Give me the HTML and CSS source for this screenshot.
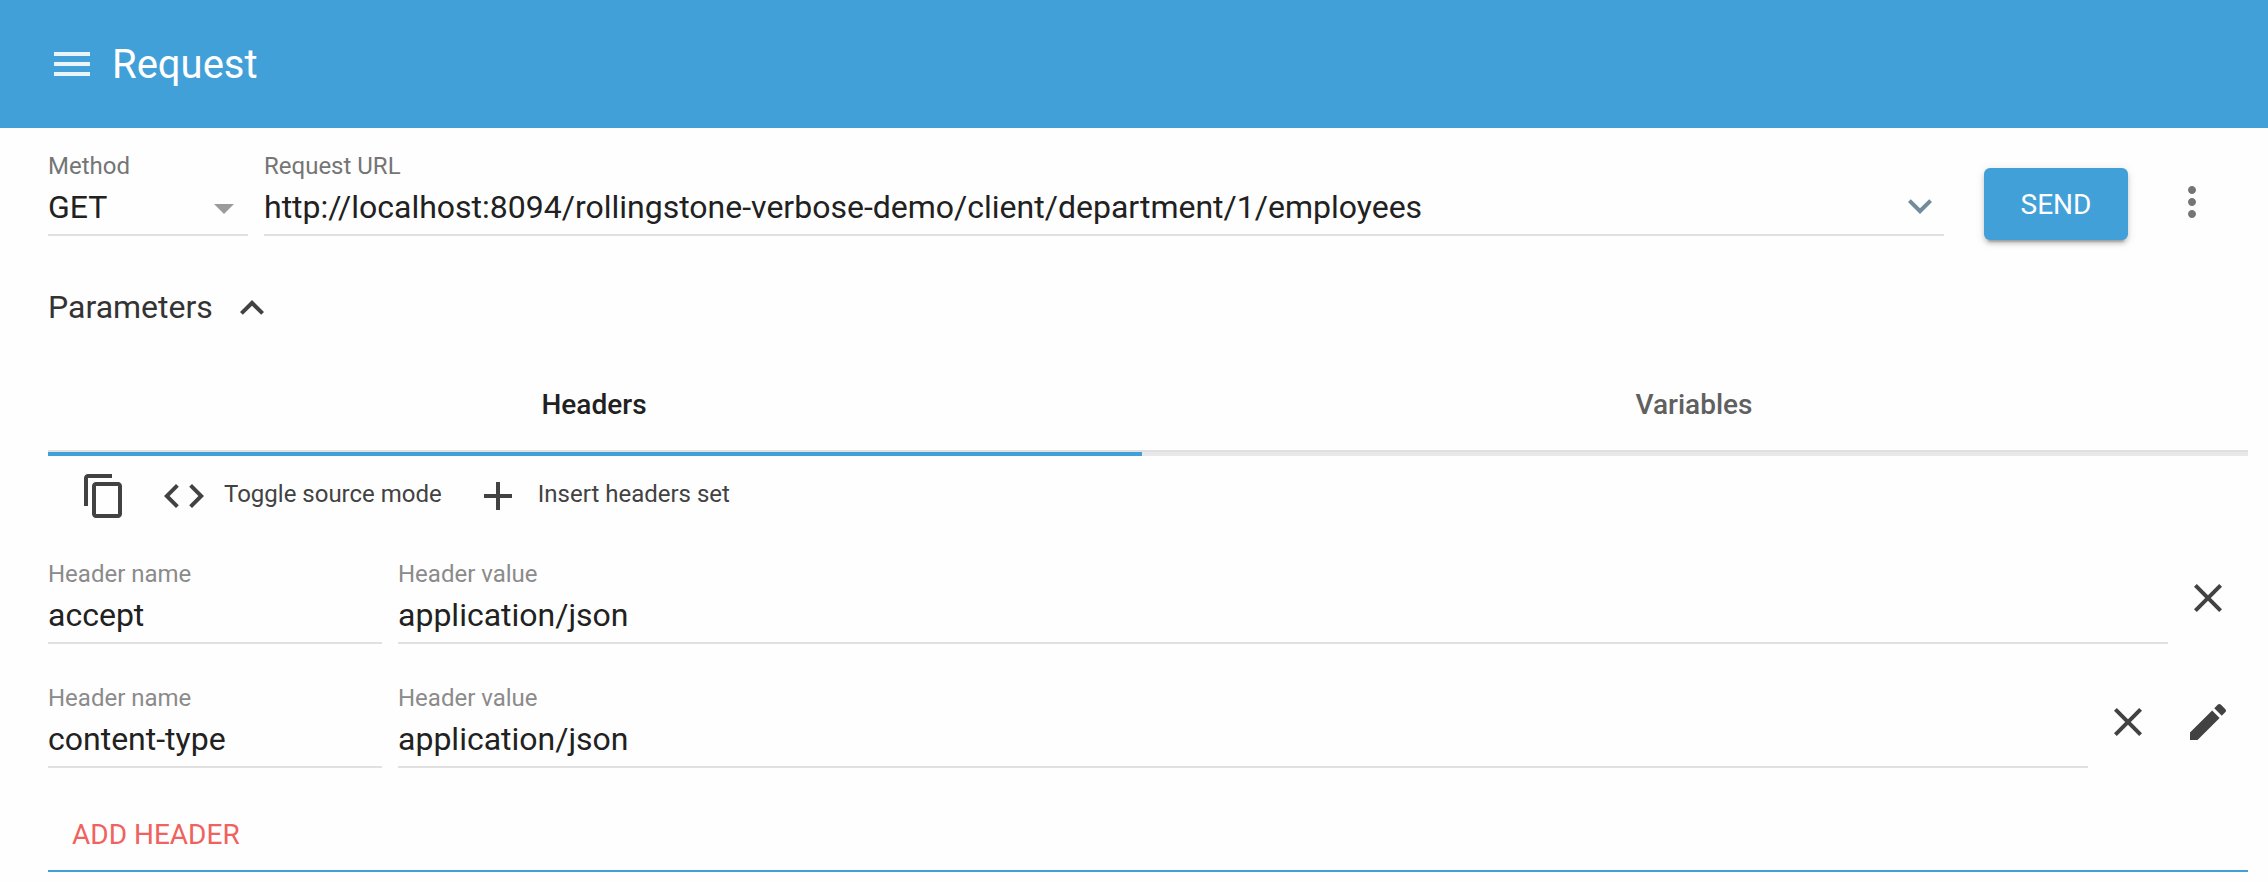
FILE: index.html
```html
<!DOCTYPE html>
<html lang="en">
<head>
<meta charset="utf-8">
<title>Request</title>
<link rel="stylesheet" href="styles.css">
</head>
<body>
<header class="toolbar">
  <svg class="icon menu-icon" viewBox="0 0 24 24"><path d="M3 18h18v-2H3v2zm0-5h18v-2H3v2zm0-7v2h18V6H3z"/></svg>
  <h1 class="title">Request</h1>
</header>
<main class="content">
  <section class="request-line">
    <div class="field method">
      <label class="label">Method</label>
      <div class="value"><span>GET</span><svg class="icon drop" viewBox="0 0 24 24"><path d="M7 10l5 5 5-5z"/></svg></div>
    </div>
    <div class="field url">
      <label class="label">Request URL</label>
      <div class="value"><span>http://localhost:8094/rollingstone-verbose-demo/client/department/1/employees</span><svg class="icon expand" viewBox="0 0 24 24"><path d="M16.59 8.59L12 13.17 7.41 8.59 6 10l6 6 6-6z"/></svg></div>
    </div>
    <button class="send">SEND</button>
    <svg class="icon more" viewBox="0 0 24 24"><path d="M12 8c1.1 0 2-.9 2-2s-.9-2-2-2-2 .9-2 2 .9 2 2 2zm0 2c-1.1 0-2 .9-2 2s.9 2 2 2 2-.9 2-2-.9-2-2-2zm0 6c-1.1 0-2 .9-2 2s.9 2 2 2 2-.9 2-2-.9-2-2-2z"/></svg>
  </section>
  <div class="parameters">
    <span>Parameters</span>
    <svg class="icon" viewBox="0 0 24 24"><path d="M12 8l-6 6 1.41 1.41L12 10.83l4.59 4.58L18 14z"/></svg>
  </div>
  <nav class="tabs">
    <div class="tab selected">Headers</div>
    <div class="tab">Variables</div>
  </nav>
  <div class="actions">
    <svg class="icon" viewBox="0 0 24 24"><path d="M16 1H4c-1.1 0-2 .9-2 2v14h2V3h12V1zm3 4H8c-1.1 0-2 .9-2 2v14c0 1.1.9 2 2 2h11c1.1 0 2-.9 2-2V7c0-1.1-.9-2-2-2zm0 16H8V7h11v14z"/></svg>
    <div class="action toggle">
      <svg class="icon" viewBox="0 0 24 24"><path d="M9.4 16.6L4.8 12l4.6-4.6L8 6l-6 6 6 6 1.4-1.4zm5.2 0l4.6-4.6-4.6-4.6L16 6l6 6-6 6-1.4-1.4z"/></svg>
      <span>Toggle source mode</span>
    </div>
    <div class="action insert">
      <svg class="icon" viewBox="0 0 24 24"><path d="M19 13h-6v6h-2v-6H5v-2h6V5h2v6h6v2z"/></svg>
      <span>Insert headers set</span>
    </div>
  </div>
  <section class="headers">
    <div class="header-row">
      <div class="field name"><label class="label">Header name</label><div class="value">accept</div></div>
      <div class="field header-value"><label class="label">Header value</label><div class="value">application/json</div></div>
      <div class="row-icons">
        <svg class="icon" viewBox="0 0 24 24"><path d="M19 6.41L17.59 5 12 10.59 6.41 5 5 6.41 10.59 12 5 17.59 6.41 19 12 13.41 17.59 19 19 17.59 13.41 12z"/></svg>
      </div>
    </div>
    <div class="header-row">
      <div class="field name"><label class="label">Header name</label><div class="value">content-type</div></div>
      <div class="field header-value"><label class="label">Header value</label><div class="value">application/json</div></div>
      <div class="row-icons">
        <svg class="icon" viewBox="0 0 24 24"><path d="M19 6.41L17.59 5 12 10.59 6.41 5 5 6.41 10.59 12 5 17.59 6.41 19 12 13.41 17.59 19 19 17.59 13.41 12z"/></svg>
        <svg class="icon" viewBox="0 0 24 24"><path d="M3 17.25V21h3.75L17.81 9.94l-3.75-3.75L3 17.25zM20.71 7.04c.39-.39.39-1.02 0-1.41l-2.34-2.34c-.39-.39-1.02-.39-1.41 0l-1.83 1.83 3.75 3.75 1.83-1.83z"/></svg>
      </div>
    </div>
  </section>
  <div class="footer"><button class="add">ADD HEADER</button></div>
</main>
</body>
</html>
```
FILE: styles.css
```css
* {
  box-sizing: border-box;
}

body {
  margin: 0;
  background: #fefefe;
  color: #212121;
  font-family: Roboto, "Liberation Sans", sans-serif;
  font-size: 32px;
}

button {
  border: 0;
  padding: 0;
  background: none;
  font: inherit;
}

.icon {
  display: block;
  flex: none;
  width: 48px;
  height: 48px;
  fill: #424242;
}

.toolbar {
  display: flex;
  align-items: center;
  gap: 16px;
  height: 128px;
  padding: 0 48px;
  background: #42a0d9;
  color: #fff;
}

.menu-icon {
  fill: #e9f4fb;
}

.title {
  margin: 0;
  padding-top: 2px;
  font-size: 40px;
  font-weight: 400;
  line-height: 48px;
}

.content {
  padding: 18px 20px 0 48px;
}

.request-line {
  display: flex;
  align-items: flex-start;
  padding-right: 32px;
}

.field {
  border-bottom: 2px solid #e0e0e0;
}

.label {
  display: block;
  color: #757575;
  font-size: 24px;
  line-height: 40px;
}

.value {
  display: flex;
  justify-content: space-between;
  height: 48px;
  line-height: 42px;
  white-space: nowrap;
}

.method {
  width: 200px;
  margin-right: 16px;
}

.drop {
  margin-top: -2px;
  fill: #9b9b9b;
}

.url {
  flex: 1;
  margin-right: 40px;
}

.expand {
  margin-top: -4px;
  fill: #708d9b;
}

.send {
  width: 144px;
  height: 72px;
  margin-top: 22px;
  border-radius: 6px;
  background: #42a0d9;
  box-shadow: 0 4px 4px rgba(0, 0, 0, .14), 0 2px 10px rgba(0, 0, 0, .12), 0 6px 2px -4px rgba(0, 0, 0, .2);
  color: #fff;
  font-size: 28px;
}

.more {
  margin: 32px 0 0 40px;
  fill: #757575;
}

.parameters {
  display: flex;
  gap: 15px;
  height: 48px;
  margin-top: 44px;
  color: #333;
  line-height: 46px;
}

.tabs {
  display: flex;
  height: 124px;
}

.tab {
  flex: 1 1 auto;
  padding: 56px 2px 0 0;
  border-bottom: 4px solid #e7e9e8;
  box-shadow: inset 0 -2px #dfe0df;
  color: #606060;
  font-size: 28px;
  font-weight: 500;
  line-height: 33px;
  text-align: center;
}

.tab.selected {
  border-bottom-color: #42a0d9;
  color: #212121;
}

.actions {
  display: flex;
  margin-top: 16px;
  padding-left: 32px;
  color: #424242;
  font-size: 24px;
  line-height: 44px;
}

.action {
  display: flex;
  gap: 16px;
}

.toggle,
.insert {
  margin-left: 32px;
}

.headers {
  display: flex;
  flex-direction: column;
  gap: 34px;
  margin-top: 34px;
}

.header-row {
  display: flex;
}

.headers .label {
  color: #8b8b8b;
}

.name {
  width: 334px;
  margin-right: 16px;
}

.header-value {
  flex: 1;
}

.row-icons {
  display: flex;
  gap: 32px;
  padding: 20px 16px 0 16px;
}

.footer {
  height: 104px;
  border-bottom: 2px solid #42a0d9;
}

.add {
  margin: 50px 0 0 24px;
  color: #f0625d;
  font-size: 28px;
  line-height: 33px;
}
```
